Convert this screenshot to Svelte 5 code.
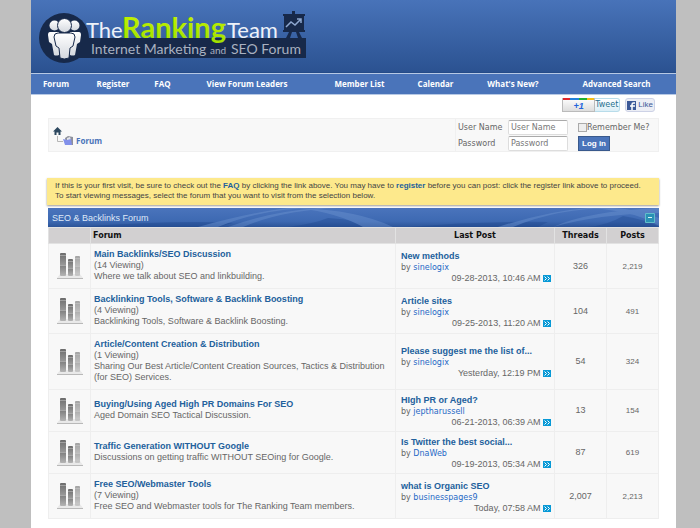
<script lang="ts">
	const navItems = [
		"Forum",
		"Register",
		"FAQ",
		"View Forum Leaders",
		"Member List",
		"Calendar",
		"What's New?",
		"Advanced Search",
	];

	const forums = [
		{
			title: "Main Backlinks/SEO Discussion",
			viewing: 14,
			description: "Where we talk about SEO and linkbuilding.",
			post: "New methods",
			author: "sinelogix",
			date: "09-28-2013, 10:46 AM",
			threads: "326",
			posts: "2,219",
		},
		{
			title: "Backlinking Tools, Software & Backlink Boosting",
			viewing: 4,
			description: "Backlinking Tools, Software & Backlink Boosting.",
			post: "Article sites",
			author: "sinelogix",
			date: "09-25-2013, 11:20 AM",
			threads: "104",
			posts: "491",
		},
		{
			title: "Article/Content Creation & Distribution",
			viewing: 1,
			description:
				"Sharing Our Best Article/Content Creation Sources, Tactics & Distribution (for SEO) Services.",
			post: "Please suggest me the list of...",
			author: "sinelogix",
			date: "Yesterday, 12:19 PM",
			threads: "54",
			posts: "324",
		},
		{
			title: "Buying/Using Aged High PR Domains For SEO",
			viewing: 0,
			description: "Aged Domain SEO Tactical Discussion.",
			post: "HIgh PR or Aged?",
			author: "jeptharussell",
			date: "06-21-2013, 06:39 AM",
			threads: "13",
			posts: "154",
		},
		{
			title: "Traffic Generation WITHOUT Google",
			viewing: 0,
			description: "Discussions on getting traffic WITHOUT SEOing for Google.",
			post: "Is Twitter the best social...",
			author: "DnaWeb",
			date: "09-19-2013, 05:34 AM",
			threads: "87",
			posts: "619",
		},
		{
			title: "Free SEO/Webmaster Tools",
			viewing: 7,
			description: "Free SEO and Webmaster tools for The Ranking Team members.",
			post: "what is Organic SEO",
			author: "businesspages9",
			date: "Today, 07:58 AM",
			threads: "2,007",
			posts: "2,213",
		},
	];

	let username = $state("");
	let password = $state("");
	let remember = $state(false);
	let collapsed = $state(false);
</script>

<div class="page">
	<header class="banner">
		<a href="#home" aria-label="The Ranking Team">
			<svg class="logo" width="270" height="56" viewBox="38 10 270 56">
				<defs>
					<linearGradient id="lime" x1="0" y1="0" x2="0" y2="1">
						<stop offset="0" stop-color="#c8f400" />
						<stop offset="1" stop-color="#a0e000" />
					</linearGradient>
					<linearGradient id="silver" x1="0" y1="0" x2="0" y2="1">
						<stop offset="0" stop-color="#fff" />
						<stop offset="1" stop-color="#d4d8de" />
					</linearGradient>
				</defs>
				<circle cx="64" cy="38" r="25" fill="#17294a" />
				<path d="M64 38H306V58H64z" fill="#17294a" />
				<g fill="url(#silver)">
					<circle cx="54.500" cy="25.500" r="5" />
					<circle cx="74.500" cy="25.500" r="5" />
					<path d="M50 32h9l2 9-2 14q-3 1-5 0l-2-11-3-2-1-7q0-3 2-3z" />
					<path d="M70 32h9q2 0 2 3l-1 7-3 2-2 11q-2 1-5 0l-3-14z" />
					<g stroke="#17294a" stroke-width="1">
						<path d="M58 33h13q4 0 4 4l-2 9-3 2-1 10q-5 2-9 0l-1-10-3-2-2-9q0-4 4-4z" />
						<circle cx="64.500" cy="25.500" r="7" />
					</g>
				</g>
				<text class="word" x="86" y="38" font-size="22">The</text>
				<text class="word" x="227" y="38" font-size="22">Team</text>
				<text class="tagline" x="91" y="54" font-size="14">Internet Marketing</text>
				<text class="tagline" x="210" y="54" font-size="10">and</text>
				<text class="tagline" x="231" y="54" font-size="14">SEO Forum</text>
				<text class="ranking" x="122" y="38" font-size="29">Ranking</text>
				<g fill="#17294a">
					<path d="M292 11h3v3h10v2h-1v14h1v2h-22v-2h1V16h-1v-2h9z" />
					<path d="M289 32h3l-2 6h-4zM296 32h3l3 6h-4z" />
				</g>
				<path
					d="M286 27l5-5 4 3 6-6M297 19h4v4"
					fill="none"
					stroke="#8fa8d0"
					stroke-width="1.500"
				/>
			</svg>
		</a>
	</header>

	<nav class="navbar">
		{#each navItems as item}
			<a href="#nav">{item}</a>
		{/each}
	</nav>

	<main>
		<div class="share">
			<button class="plus-one">+1</button>
			<button class="tweet">Tweet</button>
			<button class="like">
				<svg width="9" height="9" viewBox="0 0 9 9" aria-hidden="true">
					<path d="M0 0h9v9H0z" fill="#3b5998" />
					<path d="M8 2H6.500Q5 2 5 3.500V9M3 5h5" fill="none" stroke="#fff" stroke-width="1.500" />
				</svg>
				Like
			</button>
		</div>

		<div class="topbar">
			<div class="breadcrumb">
				<svg width="21" height="20" viewBox="0 0 21 20" aria-hidden="true">
					<path d="M4.500 0L9 4.500H7.500V8h-2V5.500h-2V8h-2V4.500H0z" fill="#2d485f" />
					<path d="M4.500 9v5.500H10" fill="none" stroke="#b5b5b5" />
					<path d="M12 11l3-2 5 1v8h-7z" fill="#8d909b" />
					<path d="M14 11l3-1 1 3h-4z" fill="#e4e5ea" />
					<path d="M10 12l4 1 4-1 1 6h-7z" fill="#8290ea" />
				</svg>
				<a href="#forum">Forum</a>
			</div>
			<form class="login" onsubmit={(e) => e.preventDefault()}>
				<label for="username">User Name</label>
				<input id="username" type="text" placeholder="User Name" bind:value={username} />
				<label class="remember">
					<input type="checkbox" bind:checked={remember} />Remember Me?
				</label>
				<label for="password">Password</label>
				<input id="password" type="password" placeholder="Password" bind:value={password} />
				<button>Log in</button>
			</form>
		</div>

		<p class="notice">
			If this is your first visit, be sure to check out the <a href="#faq">FAQ</a> by clicking the link
			above. You may have to <a href="#register">register</a> before you can post: click the register
			link above to proceed.<br />
			To start viewing messages, select the forum that you want to visit from the selection below.
		</p>

		<section>
			<div class="category">
				<svg class="waves" viewBox="0 0 611 19" preserveAspectRatio="none" aria-hidden="true">
					<g fill="#163f86">
						<path d="M30 19Q130 12 185 15L170 19zM280 10Q310 12 330 19H240Q265 16 280 10z" />
						<path d="M360 19Q430 13 500 14L490 19zM575 8Q600 12 611 19H540Q560 17 575 8z" />
					</g>
					<path d="M170 19Q215 0 270 0H240Q205 4 150 19z" />
					<path d="M195 19Q235 2 290 0H270Q220 4 180 19z" />
					<path d="M250 0Q310 2 345 19H315Q290 5 250 0z" />
					<path d="M465 19Q510 0 565 0H540Q500 3 450 19z" />
					<path d="M505 19Q540 3 611 0V5Q550 6 505 19z" />
					<path d="M545 0Q590 4 611 18V10Q590 1 565 0z" />
				</svg>
				<h2>SEO &amp; Backlinks Forum</h2>
				<button
					class="collapse"
					aria-label="Toggle category"
					onclick={() => (collapsed = !collapsed)}
				>
					<svg width="10" height="10" viewBox="0 0 10 10" aria-hidden="true">
						<path d="M.5.5h9v9h-9z" fill="#2a91b5" stroke="#62bdca" />
						<path d="M3 4.500h4" stroke="#d9f4f4" />
					</svg>
				</button>
			</div>

			<table>
				<colgroup>
					<col class="col-icon" />
					<col />
					<col class="col-last" />
					<col class="col-threads" />
					<col class="col-posts" />
				</colgroup>
				<thead>
					<tr>
						<th></th>
						<th class="left">Forum</th>
						<th>Last Post</th>
						<th>Threads</th>
						<th>Posts</th>
					</tr>
				</thead>
				{#if !collapsed}
					<tbody>
						{#each forums as forum}
							<tr>
								<td class="status">
									<svg width="26" height="28" viewBox="0 0 26 28" aria-hidden="true">
										<defs>
											<linearGradient id="bar" x1="0" y1="0" x2="0" y2="1">
												<stop offset="0" stop-color="#6c6c6c" />
												<stop offset="0.500" stop-color="#969696" />
												<stop offset="0.550" stop-color="#808080" />
												<stop offset="1" stop-color="#b4b4b4" />
											</linearGradient>
										</defs>
										<path d="M3 22h20l3 4H0z" fill="#e9e9e9" />
										<path d="M0 26h26v1H0z" fill="#b9b9b9" />
										<rect x="3" y="1" width="6" height="23" rx="1" fill="url(#bar)" />
										<rect x="11" y="7" width="5" height="17" rx="1" fill="url(#bar)" />
										<rect x="18" y="4" width="5" height="20" rx="1" fill="url(#bar)" opacity="0.600" />
										<path
											d="M3 3.500h6M3 13.500h6M11 9.500h5M11 16.500h5M18 6.500h5M18 14.500h5"
											stroke="#ccc"
											opacity="0.500"
										/>
									</svg>
								</td>
								<td class="info">
									<a class="title" href="#forum">{forum.title}</a>
									{#if forum.viewing}
										<div>({forum.viewing} Viewing)</div>
									{/if}
									<div>{forum.description}</div>
								</td>
								<td class="last">
									<a class="title" href="#post">{forum.post}</a>
									<div class="by">by <a href="#member">{forum.author}</a></div>
									<div class="date">
										{forum.date}
										<a href="#last" aria-label="Go to last post">
											<svg width="8" height="7" viewBox="0 0 8 7" aria-hidden="true">
												<path d="M0 0h8v7H0z" fill="#0799d6" />
												<path d="M1.500 1.500l2 2-2 2M4.500 1.500l2 2-2 2" fill="none" stroke="#fff" />
											</svg>
										</a>
									</div>
								</td>
								<td class="threads">{forum.threads}</td>
								<td class="posts">{forum.posts}</td>
							</tr>
						{/each}
					</tbody>
				{/if}
			</table>
		</section>
	</main>
</div>

<style>
	:global(body) {
		background: #bfbfbf;
	}

	.page {
		box-sizing: border-box;
		min-height: 100vh;
		margin: 0 24px 0 31px;
		background: #fff;
		font-family: "Liberation Sans", Arial, sans-serif;
		font-size: 9px;
		color: #666;
	}

	a {
		color: #22609c;
		text-decoration: none;
	}

	button {
		font-family: inherit;
		cursor: pointer;
	}

	.banner {
		height: 62px;
		padding: 10px 7px 0;
		border-bottom: 1px solid #244b88;
		background: linear-gradient(#4873b9, #2b5291);
	}

	.logo {
		display: block;
		font-family: Lato, sans-serif;
	}

	.word {
		fill: #eef2f8;
	}

	.tagline {
		fill: #a9b1c0;
	}

	.ranking {
		fill: url(#lime);
		font-weight: 700;
	}

	.navbar {
		display: grid;
		grid-template-columns: 50fr 64fr 35fr 134fr 91fr 61fr 94fr 113fr;
		padding-right: 3px;
		border-top: 1px solid #b7c9e5;
		border-bottom: 1px solid #b7c9e5;
		background: #4a74ba;
	}

	.navbar a {
		color: #fff;
		font-family: "Open Sans", sans-serif;
		font-size: 8px;
		font-weight: 700;
		line-height: 20px;
		text-align: center;
		white-space: nowrap;
	}

	main {
		padding: 3px 17px 10px;
	}

	.share {
		display: flex;
		justify-content: flex-end;
		padding-right: 4px;
	}

	.share button {
		height: 14px;
		padding: 0 3px;
		border: 1px solid #b8dcea;
		border-radius: 3px;
		background: linear-gradient(#fff, #dceff7);
		color: #28718f;
		font-family: "DejaVu Sans", sans-serif;
		font-size: 8px;
		line-height: 12px;
	}

	.share .plus-one {
		width: 33px;
		padding-top: 2px;
		border-color: #bbb;
		border-top: 0;
		border-radius: 0;
		background:
			linear-gradient(90deg, #e0252b 25%, #2381d9 25% 50%, #1fb030 50% 75%, #f5bc14 75%) top / 100% 2px
				no-repeat border-box,
			linear-gradient(#fff, #ddd);
		color: #2263dc;
		font-family: "Liberation Sans", Arial, sans-serif;
		font-size: 9px;
		font-weight: 700;
		font-style: italic;
	}

	.share .tweet {
		border-left: 0;
		border-radius: 0 3px 3px 0;
		padding: 0 1px 0 0;
	}

	.share .like {
		display: flex;
		align-items: center;
		gap: 2px;
		margin-left: 5px;
		padding: 0 1px;
		border-color: #cdd2e6;
		background: #eceef5;
		color: #3b5998;
		font-family: "Liberation Sans", Arial, sans-serif;
		font-size: 8px;
	}

	.topbar {
		display: flex;
		justify-content: space-between;
		margin-top: 6px;
		border: 1px solid #f0f0f0;
		background: #f8f8f8;
	}

	.breadcrumb {
		display: flex;
		align-items: flex-end;
		gap: 2px;
		padding: 0 0 4px 4px;
	}

	.breadcrumb a {
		color: #4a74ba;
		font-family: "Noto Sans", sans-serif;
		font-size: 8px;
		font-weight: 700;
		line-height: 12px;
	}

	.login {
		display: grid;
		grid-template-columns: 50px 60px 90px;
		row-gap: 1px;
		align-items: center;
		padding: 1px 0 0 2px;
		border-left: 1px solid #f0f0f0;
		font-family: "DejaVu Sans", sans-serif;
		font-size: 8px;
	}

	.login input[type="text"],
	.login input[type="password"] {
		box-sizing: border-box;
		width: 60px;
		height: 15px;
		padding: 0 2px;
		border: 1px solid #ddd;
		border-top-color: #aaa;
		border-radius: 2px;
		background: #fff;
		color: #666;
		font: inherit;
	}

	.login input::placeholder {
		color: #777;
		opacity: 1;
	}

	.remember {
		display: flex;
		align-items: center;
		padding-left: 10px;
		white-space: nowrap;
	}

	.remember input {
		flex: none;
		appearance: none;
		box-sizing: border-box;
		width: 9px;
		height: 9px;
		margin: 0;
		border: 1px solid #aaa;
		background: #eee;
	}

	.remember input:checked {
		background: #4a74ba;
	}

	.login button {
		justify-self: start;
		height: 15px;
		margin-left: 10px;
		padding: 0 3px;
		border: 1px solid #39598c;
		background: #4a74ba;
		color: #fff;
		font-family: "Liberation Sans", Arial, sans-serif;
		font-size: 8px;
		font-weight: 700;
	}

	.notice {
		margin: 26px 0 0 -1px;
		padding: 3px 7px 4px 8px;
		background: #fde98c;
		box-shadow: 0 1px 2px #999;
		color: #444;
		font-size: 8px;
		line-height: 10px;
	}

	.notice a {
		font-weight: 700;
	}

	.category {
		display: flex;
		align-items: center;
		justify-content: space-between;
		position: relative;
		height: 19px;
		margin-top: 3px;
		padding: 0 4px;
		background: linear-gradient(#4a74bc, #3d69b2 70%, #2c5498);
	}

	.waves {
		position: absolute;
		inset: 0;
		width: 100%;
		height: 100%;
		fill: #7fa4dc;
		opacity: 0.3;
	}

	.category h2 {
		position: relative;
		margin: 0;
		color: #dfe9f8;
		font-size: 9px;
		font-weight: 400;
	}

	.collapse {
		position: relative;
		padding: 0;
		border: 0;
		background: none;
	}

	.collapse svg {
		display: block;
	}

	table {
		width: 100%;
		border-collapse: collapse;
		table-layout: fixed;
	}

	.col-icon {
		width: 42px;
	}

	.col-last {
		width: 159px;
	}

	.col-threads,
	.col-posts {
		width: 52px;
	}

	th {
		height: 15px;
		padding: 0;
		border: 1px solid #e2e2e2;
		background: #d2d0d1;
		color: #111;
		font-family: "DejaVu Sans", sans-serif;
		font-size: 8px;
		line-height: 15px;
	}

	th.left {
		padding-left: 2px;
		text-align: left;
	}

	td {
		padding: 4px;
		border: 1px solid #eee;
		background: #f8f8f8;
		line-height: 11px;
	}

	.status {
		padding: 0;
	}

	.status svg {
		display: block;
		margin: 0 auto;
	}

	.info {
		padding: 5px 3px 6px;
	}

	.last {
		padding: 5px 3px 3px 5px;
	}

	.title {
		display: block;
		font-weight: 700;
	}

	.by {
		font-family: "DejaVu Sans", sans-serif;
		font-size: 8px;
	}

	.by a {
		color: #2669c6;
	}

	.date {
		text-align: right;
	}

	.date svg {
		vertical-align: -1px;
	}

	.threads,
	.posts {
		text-align: center;
	}

	.posts {
		font-size: 8px;
	}
</style>
